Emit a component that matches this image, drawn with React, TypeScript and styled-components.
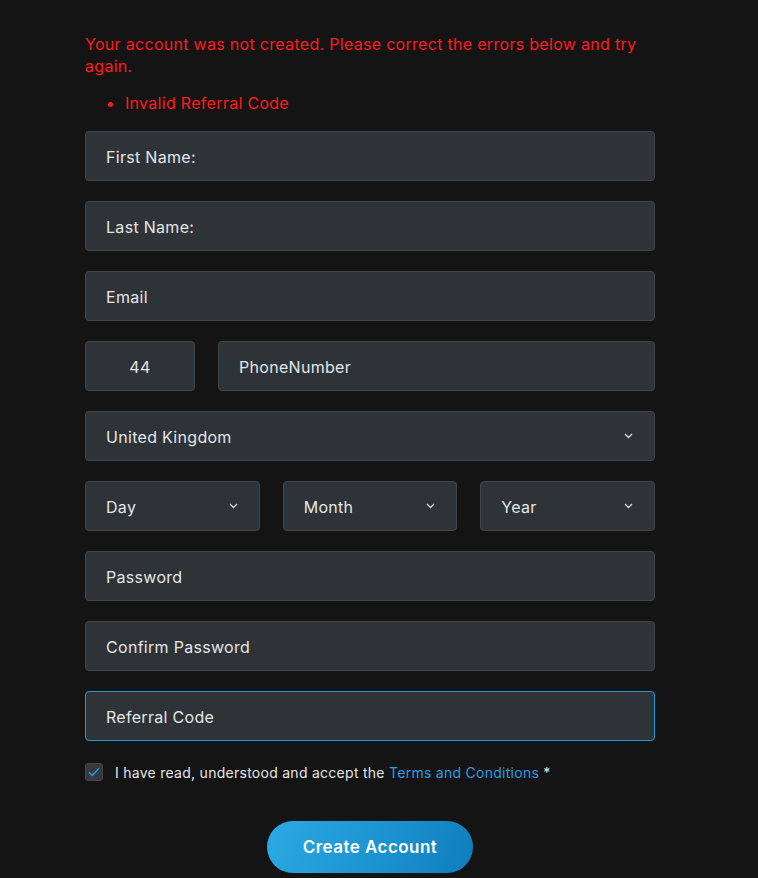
import React, { useState } from 'react';
import styled, { createGlobalStyle } from 'styled-components';

const GlobalStyle = createGlobalStyle`
  html, body {
    margin: 0;
    padding: 0;
    background: #141414;
  }
  * { box-sizing: border-box; }
`;

const Page = styled.div`
  min-height: 878px;
  background: #141414;
  padding: 33px 0 0 85px;
  font-family: Inter, "Noto Sans", sans-serif;
  letter-spacing: 0.3px;
`;

const Form = styled.form`
  width: 570px;
  display: flex;
  flex-direction: column;
`;

const ErrorText = styled.p`
  margin: 0;
  color: #ff1a1a;
  font-size: 16px;
  line-height: 22px;
`;

const ErrorList = styled.ul`
  margin: 15px 0 17px;
  padding-left: 40px;
  color: #ff1a1a;
  font-size: 16px;
  line-height: 22px;

  li::marker { font-size: 17px; }
`;

const Fields = styled.div`
  display: flex;
  flex-direction: column;
  gap: 20px;
`;

const Row = styled.div<{ $cols: string }>`
  display: grid;
  grid-template-columns: ${p => p.$cols};
  gap: 23px;
`;

const Field = styled.div<{ $focus?: boolean; $center?: boolean }>`
  height: 50px;
  background: #2e3337;
  border: 1px solid ${p => (p.$focus ? '#1e9ad6' : '#41464b')};
  border-radius: 4px;
  display: flex;
  align-items: center;
  justify-content: ${p => (p.$center ? 'center' : 'space-between')};
  padding: ${p => (p.$center ? '0' : '0 21px 0 20px')};
  color: #e4e6e8;
  font-size: 16px;
`;

const Label = styled.span`
  padding-top: 1px;
`;

const Chevron = () => (
  <svg width="9" height="6" viewBox="0 0 9 6" fill="none">
    <path d="M1 1l3.5 3.5L8 1" stroke="#d6dbe0" strokeWidth="1.3" />
  </svg>
);

const Agree = styled.label`
  display: flex;
  align-items: center;
  gap: 12px;
  margin-top: 22px;
  color: #e6e6e6;
  font-size: 14px;
  letter-spacing: 0.27px;
`;

const Box = styled.span`
  width: 18px;
  height: 18px;
  border-radius: 3px;
  background: #343a40;
  border: 1px solid #3f454b;
  display: flex;
  align-items: center;
  justify-content: center;
`;

const TermsLink = styled.a`
  color: #2a9de3;
  text-decoration: none;
`;

const Submit = styled.button`
  align-self: center;
  margin-top: 40px;
  width: 206px;
  height: 52px;
  border: none;
  border-radius: 26px;
  background: linear-gradient(110deg, #2aaae2 0%, #1d95d3 50%, #0f7dbc 100%);
  color: #fff;
  font-family: inherit;
  font-size: 17px;
  font-weight: 600;
  letter-spacing: 0.45px;
  cursor: pointer;
`;

const Select = ({ label }: { label: string }) => (
  <Field>
    <Label>{label}</Label>
    <Chevron />
  </Field>
);

export default function App() {
  const [checked] = useState(true);
  return (
    <Page>
      <GlobalStyle />
      <Form onSubmit={e => e.preventDefault()}>
        <ErrorText>
          Your account was not created. Please correct the errors below and try again.
        </ErrorText>
        <ErrorList>
          <li>Invalid Referral Code</li>
        </ErrorList>
        <Fields>
          <Field><Label>First Name:</Label></Field>
          <Field><Label>Last Name:</Label></Field>
          <Field><Label>Email</Label></Field>
          <Row $cols="110px 1fr">
            <Field $center><Label>44</Label></Field>
            <Field><Label>PhoneNumber</Label></Field>
          </Row>
          <Select label="United Kingdom" />
          <Row $cols="1fr 1fr 1fr">
            <Select label="Day" />
            <Select label="Month" />
            <Select label="Year" />
          </Row>
          <Field><Label>Password</Label></Field>
          <Field><Label>Confirm Password</Label></Field>
          <Field $focus><Label>Referral Code</Label></Field>
        </Fields>
        <Agree>
          <Box>
            {checked && (
              <svg width="12" height="10" viewBox="0 0 12 10" fill="none">
                <path d="M1 5.2l3.2 3.2L11 1.2" stroke="#2a9de3" strokeWidth="1.4" />
              </svg>
            )}
          </Box>
          <span>
            I have read, understood and accept the <TermsLink href="#">Terms and Conditions</TermsLink> *
          </span>
        </Agree>
        <Submit type="submit">Create Account</Submit>
      </Form>
    </Page>
  );
}
